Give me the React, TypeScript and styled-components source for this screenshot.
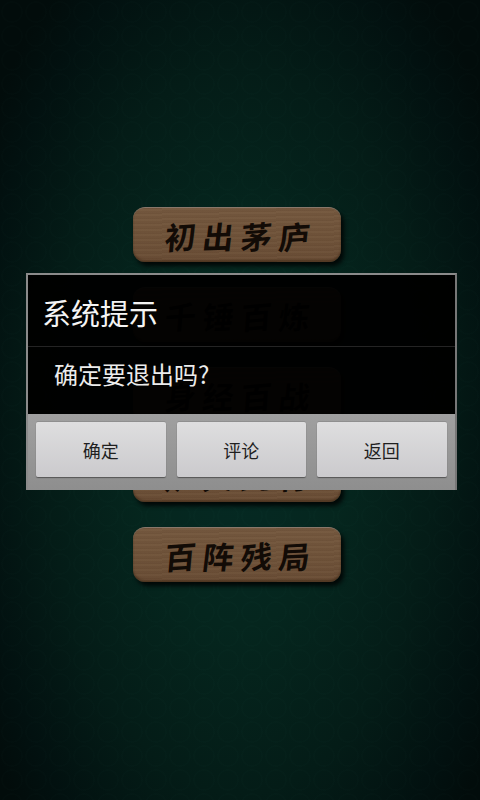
import React from "react";
import styled, { createGlobalStyle } from "styled-components";

const Global = createGlobalStyle`
  html, body { margin: 0; padding: 0; width: 480px; height: 800px; overflow: hidden; background: #020a0a; }
  * { box-sizing: border-box; }
`;

const Screen = styled.div`
  position: relative;
  width: 480px;
  height: 800px;
  overflow: hidden;
  display: flex;
  flex-direction: column;
  align-items: center;
  padding: 207px 6px 0 0;
  gap: 25px;
  background:
    radial-gradient(circle at 12px 12px, transparent 9px, rgba(120, 255, 220, 0.006) 9.5px 10.5px, transparent 11px) 0 0 / 24px 24px,
    radial-gradient(ellipse 300px 560px at 240px 430px, #052a24 0%, #05261e 35%, #041c17 65%, #021110 88%, #020c0b 100%);
`;

const Plank = styled.div`
  width: 208px;
  height: 55px;
  flex: none;
  border-radius: 12px;
  display: flex;
  align-items: center;
  justify-content: center;
  gap: 7px;
  border-top: 1px solid #88776a;
  background:
    repeating-linear-gradient(179deg, rgba(60, 35, 15, 0.08) 0 1px, rgba(255, 220, 170, 0.025) 1px 3px, rgba(60, 35, 15, 0.04) 3px 5px),
    linear-gradient(180deg, #74583f 0%, #6f533a 55%, #694d36 100%);
  box-shadow: 3px 4px 4px rgba(0, 0, 0, 0.8), inset 0 -2px 2px rgba(50, 28, 10, 0.45);
`;

const Glyph = styled.span<{ $tilt: number }>`
  font-family: "Noto Sans CJK SC", "Noto Sans CJK TC", sans-serif;
  font-weight: 700;
  font-size: 31px;
  line-height: 1;
  color: #120b06;
  transform: skewX(-9deg) rotate(${(p) => p.$tilt}deg);
`;

const Dialog = styled.div`
  position: absolute;
  left: 26px;
  top: 273px;
  width: 431px;
  height: 217px;
  border: 2px solid #8b8b8b;
  border-right-color: #777;
  border-bottom: none;
  display: flex;
  flex-direction: column;
  background: rgba(0, 0, 0, 0.96);
  font-family: "Noto Sans CJK SC", "Noto Sans", sans-serif;
`;

const Title = styled.div`
  height: 72px;
  flex: none;
  display: flex;
  align-items: center;
  padding-left: 14px;
  padding-top: 3px;
  font-size: 29px;
  color: #f4f4f4;
  border-bottom: 1px solid #242424;
`;

const Message = styled.div`
  flex: 1;
  padding: 11px 0 0 26px;
  font-size: 24px;
  line-height: 32px;
  color: #ececec;
`;

const ButtonBar = styled.div`
  height: 76px;
  flex: none;
  display: grid;
  grid-template-columns: repeat(3, 129.5px);
  column-gap: 11px;
  padding: 8px 8px 13px;
  background: linear-gradient(180deg, #a0a0a0 0%, #8e8e8e 100%);
`;

const Action = styled.div`
  display: flex;
  align-items: center;
  justify-content: center;
  font-size: 18px;
  color: #1f1f1f;
  border-radius: 2px;
  background: linear-gradient(180deg, #dededf 0%, #cbcacd 100%);
  box-shadow: 0 1px 1px #555, 0 -1px 0 rgba(120, 120, 120, 0.4);
`;

const plaques = ["初出茅庐", "千锤百炼", "身经百战", "炉火纯青", "百阵残局"];
const tilts = [-4, -2, -5, -3];
const actions = ["确定", "评论", "返回"];

export default function App() {
  return (
    <Screen>
      <Global />
      {plaques.map((label) => (
        <Plank key={label}>
          {Array.from(label).map((ch, i) => (
            <Glyph key={i} $tilt={tilts[i]}>
              {ch}
            </Glyph>
          ))}
        </Plank>
      ))}
      <Dialog>
        <Title>系统提示</Title>
        <Message>确定要退出吗?</Message>
        <ButtonBar>
          {actions.map((a) => (
            <Action key={a}>{a}</Action>
          ))}
        </ButtonBar>
      </Dialog>
    </Screen>
  );
}
